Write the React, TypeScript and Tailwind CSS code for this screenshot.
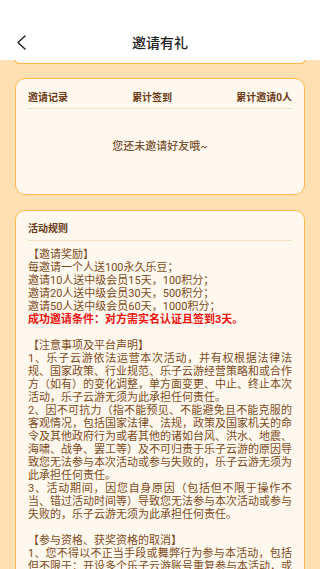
import React from "react";

const font = { fontFamily: '"Roboto", "Noto Sans CJK SC", sans-serif' };

type Line = { t: string; full?: boolean; red?: boolean };

const rules: Line[] = [
  { t: "【邀请奖励】" },
  { t: "每邀请一个人送100永久乐豆；" },
  { t: "邀请10人送中级会员15天，100积分；" },
  { t: "邀请20人送中级会员30天，500积分；" },
  { t: "邀请50人送中级会员60天，1000积分；" },
  { t: "成功邀请条件：对方需实名认证且签到3天。", red: true },
  { t: "" },
  { t: "【注意事项及平台声明】" },
  { t: "1、乐子云游依法运营本次活动，并有权根据法律法", full: true },
  { t: "规、国家政策、行业规范、乐子云游经营策略和或合作", full: true },
  { t: "方（如有）的变化调整，单方面变更、中止、终止本次", full: true },
  { t: "活动，乐子云游无须为此承担任何责任。" },
  { t: "2、因不可抗力（指不能预见、不能避免且不能克服的", full: true },
  { t: "客观情况，包括国家法律、法规，政策及国家机关的命", full: true },
  { t: "令及其他政府行为或者其他的诸如台风、洪水、地震、", full: true },
  { t: "海啸、战争、罢工等）及不可归责于乐子云游的原因导", full: true },
  { t: "致您无法参与本次活动或参与失败的，乐子云游无须为", full: true },
  { t: "此承担任何责任。" },
  { t: "3、活动期间，因您自身原因（包括但不限于操作不", full: true },
  { t: "当、错过活动时间等）导致您无法参与本次活动或参与", full: true },
  { t: "失败的，乐子云游无须为此承担任何责任。" },
  { t: "" },
  { t: "【参与资格、获奖资格的取消】" },
  { t: "1、您不得以不正当手段或舞弊行为参与本活动，包括", full: true },
  { t: "但不限于：开设多个乐子云游账号重复参与本活动，或", full: true },
];

export default function App() {
  return (
    <div
      className="w-[320px] h-[569px] overflow-hidden bg-[#ffe0b2] flex flex-col"
      style={font}
    >
      {/* header */}
      <header className="h-[60px] shrink-0 bg-white flex items-end pb-[7px] relative">
        <div className="w-full h-[20px] flex items-center justify-center">
          <span className="text-[14px] leading-[20px] font-medium text-[#222]">
            邀请有礼
          </span>
        </div>
        <svg
          className="absolute left-[16px] bottom-[10px]"
          width="11"
          height="15"
          viewBox="0 0 11 15"
          fill="none"
        >
          <path
            d="M9 1 L2 7.5 L9 14"
            stroke="#222"
            strokeWidth="1.5"
            strokeLinecap="round"
            strokeLinejoin="round"
          />
        </svg>
      </header>

      <div className="px-[15px] flex flex-col">
        {/* scrolled-off card */}
        <div className="h-[4px] rounded-b-[10px] border border-t-0 border-[#ffb84d] bg-[#fff8ee]" />

        {/* records */}
        <div className="mt-[14px] rounded-[10px] border border-[#ffb84d] bg-[#fff8ee] px-[12px] pt-[12px]">
          <div className="flex justify-between text-[10px] leading-[14px] font-bold text-[#6b3a17]">
            <span>邀请记录</span>
            <span>累计签到</span>
            <span>累计邀请0人</span>
          </div>
          <div className="mt-[3px] h-px bg-[#f8e0c2]" />
          <div className="pt-[31px] pb-[40px] text-center text-[11px] leading-[14px] font-medium text-[#7a5232]">
            您还未邀请好友哦~
          </div>
        </div>

        {/* rules */}
        <div className="mt-[15px] rounded-t-[10px] border border-[#ffb84d] bg-[#fff8ee] px-[12px] pt-[11px] pb-4">
          <div className="text-[10px] leading-[14px] font-bold text-[#6b3a17]">
            活动规则
          </div>
          <div className="mt-[4px] h-px bg-[#f8e0c2]" />
          <div className="mt-[7px] text-[11px] leading-[13px] text-[#7d4b22]">
            {rules.map((l, i) => (
              <div
                key={i}
                className={
                  "h-[13px] whitespace-nowrap " +
                  (l.full ? "text-justify [text-align-last:justify] " : "") +
                  (l.red ? "font-bold text-[#f01010]" : "")
                }
              >
                {l.t}
              </div>
            ))}
          </div>
        </div>
      </div>
    </div>
  );
}
